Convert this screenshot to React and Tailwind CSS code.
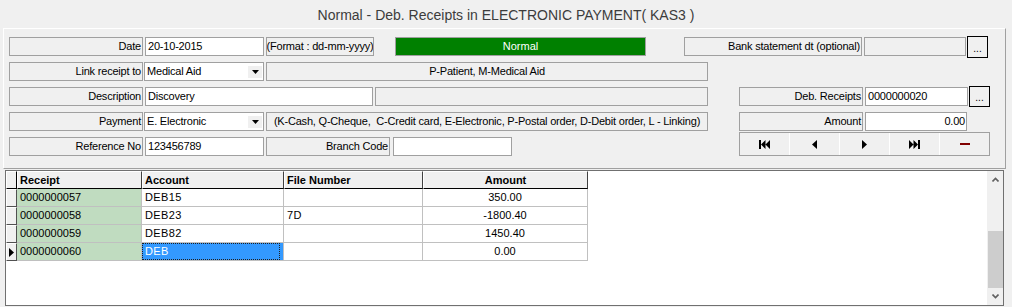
import React from 'react';

const FONT = "font-['Liberation_Sans',Arial,sans-serif]";

function Label({ w, children, className = '' }) {
  return (
    <div className={`h-[19px] shrink-0 border border-[#a0a0a0] bg-[#f0f0f0] flex items-center justify-end pr-[1px] text-[11px] tracking-[-0.2px] text-black whitespace-nowrap ${className}`} style={{ width: w }}>
      {children}
    </div>
  );
}

function Info({ w, children, className = '' }) {
  return (
    <div className={`h-[19px] shrink-0 border border-[#a0a0a0] bg-[#f0f0f0] flex items-center justify-center text-[11px] tracking-[-0.2px] text-black whitespace-nowrap overflow-hidden ${className}`} style={{ width: w }}>
      {children}
    </div>
  );
}

function Field({ w, children, right = false, className = '' }) {
  return (
    <div className={`h-[19px] shrink-0 border border-[#a0a0a0] bg-white flex items-center text-[11px] tracking-[-0.2px] text-black whitespace-nowrap ${right ? 'justify-end pr-[1px]' : 'pl-[2px]'} ${className}`} style={{ width: w }}>
      {children}
    </div>
  );
}

function Select({ children, className = '' }) {
  return (
    <div className={`h-[19px] w-[120px] shrink-0 border border-[#a0a0a0] bg-white flex items-center justify-between pl-[2px] pr-[1px] text-[11px] tracking-[-0.2px] text-black ${className}`}>
      <span>{children}</span>
      <span className="w-[14px] h-[12px] bg-[#f0f0f0] flex items-center justify-center">
        <svg width="7" height="4" viewBox="0 0 7 4"><path d="M0 0h7L3.5 4z" fill="#000" /></svg>
      </span>
    </div>
  );
}

function DotBtn({ h = 22, className = '' }) {
  return (
    <div className={`w-[21px] shrink-0 border border-black bg-[#f0f0f0] flex items-end justify-center pb-[3px] text-[10px] leading-none text-black ${className}`} style={{ height: h }}>
      ...
    </div>
  );
}

function NavCell({ children, first }) {
  return (
    <div className={`flex-1 flex items-center justify-center ${first ? '' : 'border-l border-white'}`}>{children}</div>
  );
}

function Nav() {
  return (
    <div className="ml-[227px] w-[251px] h-[24px] self-end border border-[#a0a0a0] bg-[#f0f0f0] flex">
      <NavCell first>
        <svg width="11" height="9" viewBox="0 0 11 9"><rect x="0" y="0" width="2" height="9" fill="#000" /><path d="M2 4.5L6.5 0v9zM6.5 4.5L11 0v9z" fill="#000" /></svg>
      </NavCell>
      <NavCell>
        <svg width="5" height="9" viewBox="0 0 5 9"><path d="M0 4.5L5 0v9z" fill="#000" /></svg>
      </NavCell>
      <NavCell>
        <svg width="5" height="9" viewBox="0 0 5 9"><path d="M5 4.5L0 0v9z" fill="#000" /></svg>
      </NavCell>
      <NavCell>
        <svg width="11" height="9" viewBox="0 0 11 9"><path d="M4.5 4.5L0 0v9zM9 4.5L4.5 0v9z" fill="#000" /><rect x="9" y="0" width="2" height="9" fill="#000" /></svg>
      </NavCell>
      <NavCell>
        <div className="w-[10px] h-[2px] bg-[#800000]" />
      </NavCell>
    </div>
  );
}

const COLS = [
  { key: 'receipt', title: 'Receipt', w: 125 },
  { key: 'account', title: 'Account', w: 142 },
  { key: 'file', title: 'File Number', w: 139 },
  { key: 'amount', title: 'Amount', w: 165, center: true },
];

const ROWS = [
  { receipt: '0000000057', account: 'DEB15', file: '', amount: '350.00' },
  { receipt: '0000000058', account: 'DEB23', file: '7D', amount: '-1800.40' },
  { receipt: '0000000059', account: 'DEB82', file: '', amount: '1450.40' },
  { receipt: '0000000060', account: 'DEB', file: '', amount: '0.00', current: true },
];

function Grid() {
  return (
    <div className="ml-[5px] mt-[1px] w-[999px] h-[136px] border border-[#707070] bg-white flex">
      <div className="flex-1 flex flex-col text-[11px] text-black">
        <div className="flex h-[18px]">
          <div className="w-[11px] h-full bg-[#f0f0f0] border-t border-l border-white border-b border-r border-b-black border-r-black" />
          {COLS.map((c) => (
            <div key={c.key} className={`h-full bg-[#f0f0f0] border-t border-l border-white border-b border-r border-b-black border-r-[#404040] flex items-center font-bold ${c.center ? 'justify-center' : 'pl-[2px]'}`} style={{ width: c.w }}>
              {c.title}
            </div>
          ))}
        </div>
        {ROWS.map((r) => (
          <div key={r.receipt} className="flex h-[18px]">
            <div className="w-[11px] h-full bg-[#f0f0f0] border-t border-l border-white border-b border-r border-b-[#505050] border-r-[#505050] flex items-center justify-center">
              {r.current && <svg width="5" height="9" viewBox="0 0 5 9"><path d="M0 0l5 4.5L0 9z" fill="#000" /></svg>}
            </div>
            {COLS.map((c) => {
              const sel = r.current && c.key === 'account';
              const bg = c.key === 'receipt' ? 'bg-[#c0dcc0]' : sel ? 'bg-[#3399ff] text-white' : 'bg-white';
              return (
                <div key={c.key} className={`h-full border-b border-r border-[#c0c0c0] flex items-center ${bg} ${c.center ? 'justify-center' : 'pl-[3px]'}`} style={{ width: c.w }}>
                  {sel ? (
                    <div className="w-full h-full border border-dotted border-[#202020] flex items-center pl-[2px] -ml-[3px] tracking-[0.4px]">{r[c.key]}</div>
                  ) : (
                    <span className={c.key === 'account' || c.key === 'file' ? 'tracking-[0.4px]' : ''}>{r[c.key]}</span>
                  )}
                </div>
              );
            })}
          </div>
        ))}
      </div>
      <div className="w-[16px] h-full bg-[#f0f0f0] flex flex-col items-center">
        <div className="h-[17px] flex items-center justify-center">
          <svg width="7" height="5" viewBox="0 0 7 5"><path d="M0.5 4.5L3.5 1.5L6.5 4.5" stroke="#606060" strokeWidth="1.6" fill="none" /></svg>
        </div>
        <div className="h-[43px]" />
        <div className="w-[15px] h-[57px] bg-[#cdcdcd]" />
        <div className="flex-1" />
        <div className="h-[17px] flex items-center justify-center">
          <svg width="7" height="5" viewBox="0 0 7 5"><path d="M0.5 0.5L3.5 3.5L6.5 0.5" stroke="#606060" strokeWidth="1.6" fill="none" /></svg>
        </div>
      </div>
    </div>
  );
}

export default function App() {
  return (
    <div className={`w-[1012px] h-[307px] bg-[#f0f0f0] overflow-hidden ${FONT}`}>
      <div className="h-[28px] flex items-center justify-center text-[14px] text-[#3c3c3c] pt-[2px]">
        Normal - Deb. Receipts in ELECTRONIC PAYMENT( KAS3 )
      </div>

      <div className="ml-[3px] w-[1003px] h-[141px] bg-[#f0f0f0] border-t border-l border-white border-r border-b border-r-[#a0a0a0] border-b-[#a0a0a0] pl-[5px] pt-[8px]">
        <div className="flex items-center h-[19px] mb-[6px]">
          <Label w={134}>Date</Label>
          <Field w={119} className="ml-[2px]">20-10-2015</Field>
          <Info w={108} className="ml-[2px]">(Format : dd-mm-yyyy)</Info>
          <div className="ml-[21px] w-[251px] h-[19px] border border-[#a0a0a0] bg-[#008000] text-white text-[11px] flex items-center justify-center">Normal</div>
          <Label w={178} className="ml-[38px]">Bank statement dt (optional)</Label>
          <div className="ml-[2px] w-[102px] h-[19px] border border-[#a0a0a0] bg-[#f0f0f0]" />
          <DotBtn className="ml-[1px]" h={22} />
        </div>

        <div className="flex items-center h-[19px] mb-[6px]">
          <Label w={134}>Link receipt to</Label>
          <Select className="ml-[1px]">Medical Aid</Select>
          <Info w={442} className="ml-[2px]">P-Patient, M-Medical Aid</Info>
        </div>

        <div className="flex items-center h-[19px] mb-[6px]">
          <Label w={134}>Description</Label>
          <Field w={228} className="ml-[2px]">Discovery</Field>
          <div className="ml-[2px] w-[333px] h-[19px] border border-[#a0a0a0] bg-[#f0f0f0]" />
          <Label w={124} className="ml-[31px]">Deb. Receipts</Label>
          <Field w={103} className="ml-[2px]">0000000020</Field>
          <DotBtn className="ml-[1px]" h={21} />
        </div>

        <div className="flex items-center h-[19px] mb-[6px]">
          <Label w={134}>Payment</Label>
          <Select className="ml-[1px]">E. Electronic</Select>
          <Info w={442} className="ml-[2px]">(K-Cash, Q-Cheque,&nbsp; C-Credit card, E-Electronic, P-Postal order, D-Debit order, L - Linking)</Info>
          <Label w={124} className="ml-[31px]">Amount</Label>
          <Field w={102} right className="ml-[2px]">0.00</Field>
        </div>

        <div className="flex items-center h-[19px]">
          <Label w={134}>Reference No</Label>
          <Field w={119} className="ml-[2px]">123456789</Field>
          <Label w={124} className="ml-[2px]">Branch Code</Label>
          <Field w={119} className="ml-[3px]" />
          <Nav />
        </div>
      </div>

      <Grid />
    </div>
  );
}
